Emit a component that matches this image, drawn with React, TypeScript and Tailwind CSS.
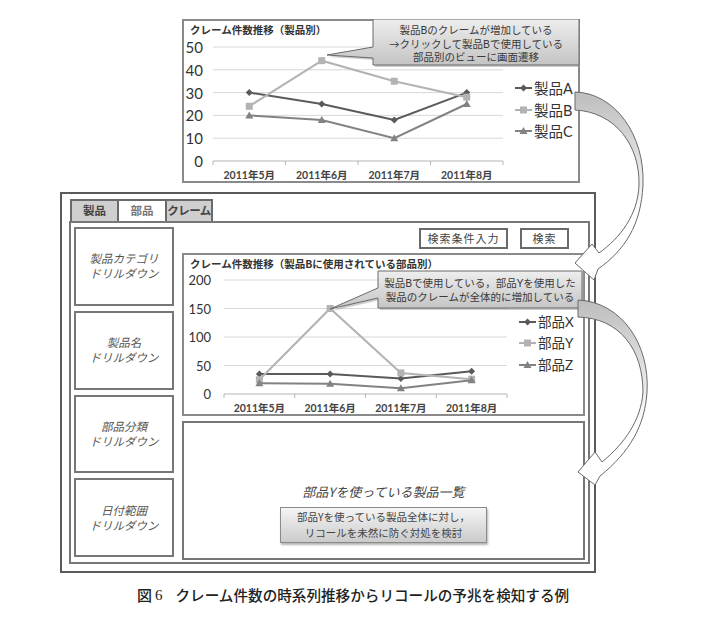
import React from "react";

type Series = {
  name: string;
  color: string;
  marker: "diamond" | "square" | "triangle";
  values: number[];
};

type ChartProps = {
  className: string;
  ox: number;
  oy: number;
  w: number;
  h: number;
  title: string;
  x0: number;
  x1: number;
  zeroY: number;
  unit: number;
  ticks: number[];
  tickX: number;
  tickSize: number;
  labelY: number;
  legendX: number;
  legendYs: number[];
  legendSize: number;
  series: Series[];
  children?: React.ReactNode;
};

const MONTHS = ["2011年5月", "2011年6月", "2011年7月", "2011年8月"];
const NUM_FONT = "Lato, 'Noto Sans CJK JP', sans-serif";
const JP_FONT = "'Noto Sans CJK JP', sans-serif";

function Marker({ kind, x, y, color }: { kind: Series["marker"]; x: number; y: number; color: string }) {
  if (kind === "diamond")
    return <polygon points={`${x},${y - 3.5} ${x + 3.5},${y} ${x},${y + 3.5} ${x - 3.5},${y}`} fill={color} />;
  if (kind === "square") return <rect x={x - 3.5} y={y - 3.5} width={7} height={7} fill={color} />;
  return <polygon points={`${x},${y - 4} ${x + 4},${y + 3} ${x - 4},${y + 3}`} fill={color} />;
}

function LineChart(p: ChartProps) {
  const cw = (p.x1 - p.x0) / 4;
  const cx = (i: number) => p.x0 + cw * (i + 0.5);
  const yv = (v: number) => p.zeroY - v * p.unit;

  return (
    <div className={`relative border-2 border-[#8a8a8a] bg-white ${p.className}`}>
      <svg
        width={p.w}
        height={p.h}
        viewBox={`${p.ox} ${p.oy} ${p.w} ${p.h}`}
        className="absolute left-[-2px] top-[-2px]"
      >
        <text x={p.ox + 8} y={p.oy + 10} fontFamily={JP_FONT} fontSize={10.5} fontWeight={700} fill="#333" dominantBaseline="central">
          {p.title}
        </text>

        {/* grid + y labels */}
        {p.ticks.map((t) => (
          <g key={t}>
            <line x1={p.x0} x2={p.x1} y1={yv(t)} y2={yv(t)} stroke={t === 0 ? "#b5b5b5" : "#d8d8d8"} strokeWidth={1} />
            <text x={p.tickX} y={yv(t)} textAnchor="end" dominantBaseline="central" fontFamily={NUM_FONT} fontSize={p.tickSize} fill="#333">
              {t}
            </text>
          </g>
        ))}
        {[0, 1, 2, 3, 4].map((i) => (
          <line key={i} x1={p.x0 + cw * i} x2={p.x0 + cw * i} y1={p.zeroY} y2={p.zeroY + 4} stroke="#b5b5b5" />
        ))}

        {/* x labels */}
        {MONTHS.map((m, i) => (
          <text key={m} x={cx(i)} y={p.labelY} textAnchor="middle" dominantBaseline="central" fontFamily={NUM_FONT} fontSize={10.5} fontWeight={700} fill="#444">
            {m}
          </text>
        ))}

        {/* series */}
        {p.series.map((s) => (
          <g key={s.name}>
            <polyline
              points={s.values.map((v, i) => `${cx(i)},${yv(v)}`).join(" ")}
              fill="none"
              stroke={s.color}
              strokeWidth={2}
            />
            {s.values.map((v, i) => (
              <Marker key={i} kind={s.marker} x={cx(i)} y={yv(v)} color={s.color} />
            ))}
          </g>
        ))}

        {/* legend */}
        {p.series.map((s, i) => (
          <g key={s.name}>
            <line x1={p.legendX} x2={p.legendX + 17} y1={p.legendYs[i]} y2={p.legendYs[i]} stroke={s.color} strokeWidth={2} />
            <Marker kind={s.marker} x={p.legendX + 8.5} y={p.legendYs[i]} color={s.color} />
            <text x={p.legendX + 19} y={p.legendYs[i]} dominantBaseline="central" fontFamily={NUM_FONT} fontSize={p.legendSize} fill="#333">
              {s.name}
            </text>
          </g>
        ))}

        {p.children}
      </svg>
    </div>
  );
}

function Callout({ d, lines, cx, ys, id }: { d: string; lines: string[]; cx: number; ys: number[]; id: string }) {
  return (
    <g>
      <defs>
        <linearGradient id={id} x1="0" y1="0" x2="0" y2="1">
          <stop offset="0" stopColor="#eeeeee" />
          <stop offset="1" stopColor="#c4c4c4" />
        </linearGradient>
      </defs>
      <path d={d} fill="#9a9a9a" opacity={0.5} transform="translate(2 2)" />
      <path d={d} fill={`url(#${id})`} stroke="#6a6a6a" strokeWidth={1} />
      {lines.map((l, i) => (
        <text key={l} x={cx} y={ys[i]} textAnchor="middle" dominantBaseline="central" fontFamily={NUM_FONT} fontSize={10.5} fill="#3a3a3a">
          {l}
        </text>
      ))}
    </g>
  );
}

function Arrows() {
  return (
    <svg width={701} height={620} className="absolute left-0 top-0 pointer-events-none">
      <defs>
        <linearGradient id="arr1" gradientUnits="userSpaceOnUse" x1="0" y1="92" x2="0" y2="215">
          <stop offset="0" stopColor="#bdbdbd" />
          <stop offset="1" stopColor="#ffffff" />
        </linearGradient>
        <linearGradient id="arr2" gradientUnits="userSpaceOnUse" x1="0" y1="300" x2="0" y2="425">
          <stop offset="0" stopColor="#bdbdbd" />
          <stop offset="1" stopColor="#ffffff" />
        </linearGradient>
      </defs>
      <path
        d="M 575 92 C 615 93, 645 135, 643 185 C 641 225, 625 250, 598 269 L 594 280 L 575 263 L 592 244 L 599 253 C 620 238, 638 215, 639 185 C 640 145, 615 112, 575 110 Z"
        fill="url(#arr1)"
        stroke="#6a6a6a"
        strokeWidth={1}
      />
      <path
        d="M 578 300 C 622 302, 650 345, 647 392 C 645 425, 630 452, 600 476 L 595 485 L 578 472 L 595 452 L 602 462 C 625 443, 641 420, 643 392 C 643 350, 620 318, 578 317 Z"
        fill="url(#arr2)"
        stroke="#6a6a6a"
        strokeWidth={1}
      />
    </svg>
  );
}

const PRODUCTS: Series[] = [
  { name: "製品A", color: "#5a5a5a", marker: "diamond", values: [30, 25, 18, 30] },
  { name: "製品B", color: "#b3b3b3", marker: "square", values: [24, 44, 35, 28] },
  { name: "製品C", color: "#828282", marker: "triangle", values: [20, 18, 10, 25] },
];

const PARTS: Series[] = [
  { name: "部品X", color: "#5a5a5a", marker: "diamond", values: [35, 35, 27, 40] },
  { name: "部品Y", color: "#b3b3b3", marker: "square", values: [25, 150, 37, 26] },
  { name: "部品Z", color: "#828282", marker: "triangle", values: [19, 18, 10, 24] },
];

const DRILLS = [
  ["製品カテゴリ", "ドリルダウン"],
  ["製品名", "ドリルダウン"],
  ["部品分類", "ドリルダウン"],
  ["日付範囲", "ドリルダウン"],
];

export default function App() {
  return (
    <div className="relative w-[701px] h-[620px] overflow-hidden bg-white font-['Noto_Sans_CJK_JP',sans-serif]">
      {/* top chart: claims by product */}
      <div className="pt-[19px] pl-[182px]">
        <LineChart
          className="w-[398px] h-[164px]"
          ox={182}
          oy={19}
          w={398}
          h={164}
          title="クレーム件数推移（製品別）"
          x0={213}
          x1={503}
          zeroY={161}
          unit={2.28}
          ticks={[0, 10, 20, 30, 40, 50]}
          tickX={203}
          tickSize={15}
          labelY={175}
          legendX={515}
          legendYs={[88, 110, 131]}
          legendSize={14.5}
          series={PRODUCTS}
        >
          <Callout
            id="co1"
            d="M373,19 H579 V65 H373 V58 L327,55 L373,47 Z"
            lines={["製品Bのクレームが増加している", "→クリックして製品Bで使用している", "部品別のビューに画面遷移"]}
            cx={476}
            ys={[30, 43.5, 57]}
          />
        </LineChart>
      </div>

      {/* application frame */}
      <div className="mt-[9px] ml-[60px] w-[536px] h-[381px] border-2 border-[#5a5a5a] pt-[5px]">
        <div className="ml-[8px] flex h-[22px] text-[11.5px] font-bold whitespace-nowrap">
          <div className="w-[49px] border-2 border-b-0 border-[#6a6a6a] bg-[#cfcfcf] text-[#444] flex items-center justify-center">製品</div>
          <div className="w-[46px] border-t-2 border-[#6a6a6a] bg-white text-[#777] flex items-center justify-center">部品</div>
          <div className="w-[48px] border-2 border-b-0 border-[#6a6a6a] bg-[#cfcfcf] text-[#444] flex items-center justify-center tracking-[-0.5px]">クレーム</div>
        </div>

        <div className="ml-[7px] w-[521px] h-[343px] border-2 border-[#777] flex gap-[8px] pl-[3px] pt-[4px]">
          {/* drill-down filters */}
          <div className="w-[100px] h-[330px] flex flex-col gap-[5px]">
            {DRILLS.map(([a, b]) => (
              <div
                key={a}
                className="flex-1 border-2 border-[#777] flex flex-col items-center justify-center text-center italic text-[11.5px] leading-[15px] text-[#555]"
              >
                <span>{a}</span>
                <span>{b}</span>
              </div>
            ))}
          </div>

          <div className="w-[403px] flex flex-col">
            <div className="mt-[1px] h-[21px] flex justify-end gap-[12px] pr-[16px] text-[11px] tracking-[1px] text-[#444]">
              <div className="w-[89px] border-2 border-[#6a6a6a] flex items-center justify-center">検索条件入力</div>
              <div className="w-[49px] border-2 border-[#6a6a6a] flex items-center justify-center">検索</div>
            </div>

            <div className="mt-[4px]">
              <LineChart
                className="w-[403px] h-[163px]"
                ox={182}
                oy={253}
                w={403}
                h={163}
                title="クレーム件数推移（製品Bに使用されている部品別）"
                x0={224}
                x1={507}
                zeroY={394}
                unit={0.57}
                ticks={[0, 50, 100, 150, 200]}
                tickX={211}
                tickSize={13}
                labelY={408}
                legendX={519}
                legendYs={[322, 343, 365]}
                legendSize={13.5}
                series={PARTS}
              >
                <Callout
                  id="co2"
                  d="M378,271 H582 V308 H378 V298 L330,309 L378,288 Z"
                  lines={["製品Bで使用している，部品Yを使用した", "製品のクレームが全体的に増加している"]}
                  cx={480}
                  ys={[283, 297]}
                />
              </LineChart>
            </div>

            <div className="mt-[5px] h-[139px] border-2 border-[#777] flex flex-col items-center pt-[60px]">
              <div className="italic text-[13px] leading-[18px] text-[#444]">部品Yを使っている製品一覧</div>
              <div className="mt-[6px] w-[207px] h-[36px] border border-[#8a8a8a] bg-linear-to-b from-[#f5f5f5] to-[#cbcbcb] shadow-[1px_2px_2px_rgba(0,0,0,0.3)] flex flex-col items-center justify-center text-[10.5px] leading-[16px] text-[#444]">
                <span>部品Yを使っている製品全体に対し，</span>
                <span>リコールを未然に防ぐ対処を検討</span>
              </div>
            </div>
          </div>
        </div>
      </div>

      {/* caption */}
      <div className="mt-[12px] pl-[137px] flex items-center text-[15px] leading-[20px] font-medium text-[#222]">
        <span>図</span>
        <span className="ml-[3px] font-['Liberation_Serif',serif]">6</span>
        <span className="ml-[13px] text-[14.6px]">クレーム件数の時系列推移からリコールの予兆を検知する例</span>
      </div>

      <Arrows />
    </div>
  );
}
